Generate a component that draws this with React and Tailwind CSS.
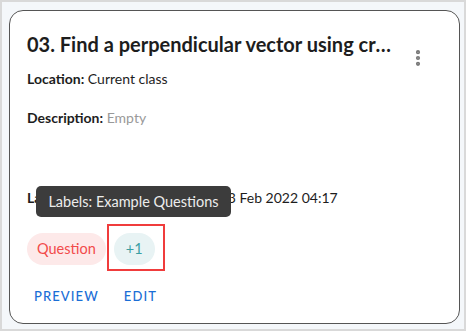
import { EllipsisVertical } from 'lucide-react';

const Chip = ({ children, className }) => (
  <span className={`inline-flex items-center h-[32px] rounded-full text-[14.5px] ${className}`}>
    {children}
  </span>
);

export default function App() {
  return (
    <div
      className="w-[466px] h-[331px] bg-[#f4f7fa] border-2 border-[#d9d9d9] pt-[8px] pl-[7px]"
      style={{ fontFamily: 'Lato, "Noto Sans", sans-serif' }}
    >
      <div className="w-[451px] h-[314px] bg-white border border-[#555] rounded-[14px] pl-[17px] pr-[20px] pt-[19px] flex flex-col">
        <div className="flex items-start justify-between h-[28px]">
          <h2 className="w-[366px] truncate text-[20px] font-bold text-[#1d1d1d] leading-[28px]">
            03. Find a perpendicular vector using cross product
          </h2>
          <EllipsisVertical className="shrink-0 mt-[18px] mr-[11px] text-[#777]" size={20} strokeWidth={3} />
        </div>
        <p className="mt-[12px] text-[14px] text-[#1d1d1d] leading-[18px]">
          <span className="font-bold">Location:</span> Current class
        </p>
        <p className="mt-[21px] text-[14px] text-[#1d1d1d] leading-[18px]">
          <span className="font-bold">Description:</span> <span className="text-[#999]">Empty</span>
        </p>
        <div className="relative mt-[62px]">
          <p className="text-[14px] text-[#1d1d1d] leading-[18px]">
            <span className="font-bold">Last modified:</span> Teachers Demo, 03 Feb 2022 04:17
          </p>
          <div className="absolute left-[9px] top-[-3px] w-[195px] h-[31px] rounded-[5px] bg-[#3c3c3c] text-[#ececec] text-[14.5px] flex items-center justify-center">
            Labels: Example Questions
          </div>
        </div>
        <div className="mt-[26px] flex items-center gap-[8px]">
          <Chip className="px-[10px] bg-[#fde9e9] text-[#f24b4b]">Question</Chip>
          <div className="relative">
            <Chip className="px-[12px] bg-[#e8f3f4] text-[#3a9fa3]">+1</Chip>
            <div className="absolute left-[-7px] top-[-9px] w-[58px] h-[47px] border-2 border-[#f03c3c]" />
          </div>
        </div>
        <div className="mt-[22px] flex items-center gap-[25px] pl-[7px] text-[13px] tracking-[1.1px] text-[#1a6ed6] font-medium">
          <span>PREVIEW</span>
          <span>EDIT</span>
        </div>
      </div>
    </div>
  );
}
